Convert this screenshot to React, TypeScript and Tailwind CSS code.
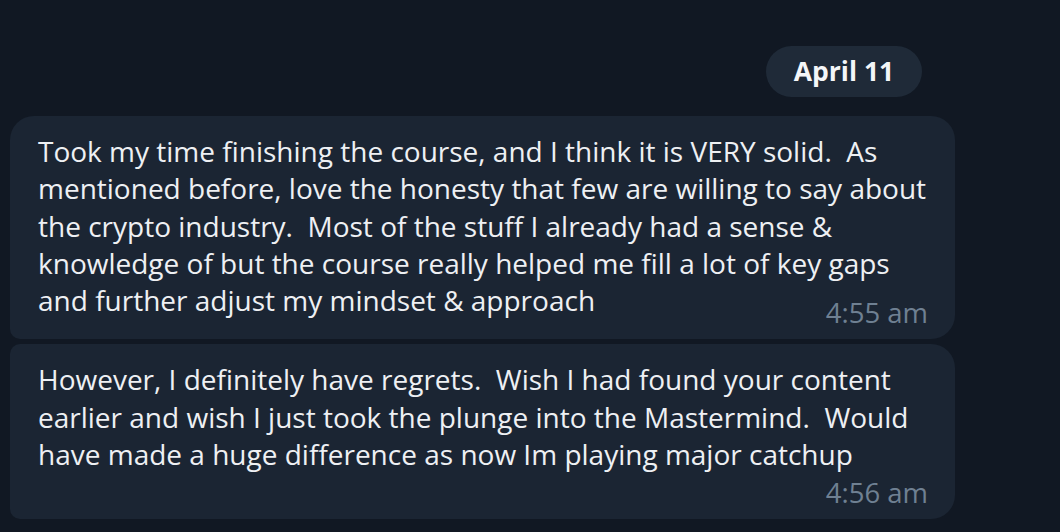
const first = [
  'Took my time finishing the course, and I think it is VERY solid.  As',
  'mentioned before, love the honesty that few are willing to say about',
  'the crypto industry.  Most of the stuff I already had a sense &',
  'knowledge of but the course really helped me fill a lot of key gaps',
  'and further adjust my mindset & approach',
]

const second = [
  'However, I definitely have regrets.  Wish I had found your content',
  'earlier and wish I just took the plunge into the Mastermind.  Would',
  'have made a huge difference as now Im playing major catchup',
]

function Bubble({ lines, time, timeClass, className }: { lines: string[]; time: string; timeClass: string; className: string }) {
  return (
    <div className={`bg-[#1b2533] pl-[28px] pr-[27px] pt-[17px] pb-[11px] ${className}`}>
      <div className="text-[28px] leading-[37.3px] text-[#eef0f3]">
        {lines.map((l, i) => (
          <div key={i} className="whitespace-pre">{l}</div>
        ))}
      </div>
      <div className={`flex justify-end ${timeClass}`}>
        <span className="text-[27.5px] leading-[30px] text-[#6f8092]">{time}</span>
      </div>
    </div>
  )
}

export default function App() {
  return (
    <div
      className="w-[1060px] h-[532px] bg-[#111823] overflow-hidden"
      style={{ fontFamily: '"Open Sans", "Noto Sans", sans-serif' }}
    >
      {/* date */}
      <div className="flex justify-end pr-[138px] pt-[46px]">
        <div className="h-[51px] w-[156px] rounded-full bg-[#1f2a38] flex items-center justify-center text-[26.5px] font-bold text-[#f4f6f8]">
          April 11
        </div>
      </div>

      {/* messages */}
      <div className="flex flex-col gap-[5px] pl-[10px] pt-[19px] w-[955px]">
        <Bubble
          lines={first}
          time="4:55 am"
          timeClass="mt-[-21px]"
          className="rounded-tl-[24px] rounded-tr-[24px] rounded-br-[24px] rounded-bl-[10px]"
        />
        <Bubble
          lines={second}
          time="4:56 am"
          timeClass="mt-[5px]"
          className="rounded-tl-[10px] rounded-tr-[24px] rounded-br-[24px] rounded-bl-[10px]"
        />
      </div>
    </div>
  )
}
